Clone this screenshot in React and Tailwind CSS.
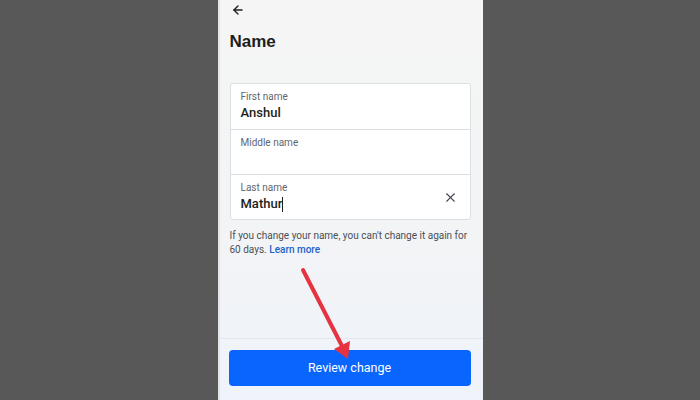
import { ArrowLeft, X } from 'lucide-react'

const fields = [
  { label: 'First name', value: 'Anshul' },
  { label: 'Middle name', value: '' },
  { label: 'Last name', value: 'Mathur', clear: true, cursor: true },
]

export default function App() {
  return (
    <div className="w-[700px] h-[400px] bg-[#585858] flex justify-center overflow-hidden font-['Roboto',Arial,sans-serif]">
      <div className="relative w-[265px] h-full flex flex-col pl-[10px] pr-[12px] bg-gradient-to-b from-[#f4f5f4] via-[#f3f4f5] to-[#eff3fa] border-l-2 border-[#e6e6e6]">
        <div className="pt-[3px] h-[18px] pl-[1px]">
          <ArrowLeft className="w-[14px] h-[14px] text-[#1c1e21]" strokeWidth={2.3} />
        </div>
        <h1 className="mt-[14px] text-[17px] leading-[20px] font-bold text-[#1c1e21] font-['Liberation_Sans',Arial,sans-serif]">Name</h1>

        <div className="mt-[31px] bg-white border border-[#dcdfe3] rounded-[3px]">
          {fields.map((f, i) => (
            <div
              key={f.label}
              className={`h-[45px] flex items-center pl-[10px] pr-[12px] ${i > 0 ? 'border-t border-[#dcdfe3]' : ''}`}
            >
              <div className="flex-1 self-start pt-[7px]">
                <div className="text-[10px] leading-[12px] text-[#606770]">{f.label}</div>
                <div className="mt-[2px] h-[16px] text-[13px] leading-[16px] font-medium text-[#1c1e21] flex items-center">
                  {f.value}
                  {f.cursor && <span className="inline-block w-[1px] h-[15px] bg-[#1c1e21]" />}
                </div>
              </div>
              {f.clear && <X className="w-[15px] h-[15px] text-[#444950]" strokeWidth={1.8} />}
            </div>
          ))}
        </div>

        <p className="mt-[9px] text-[10px] leading-[14px] text-[#4b4f56]">
          If you change your name, you can't change it again for 60 days.{' '}
          <span className="text-[#1b64c8] font-medium">Learn more</span>
        </p>

        <div className="flex-1" />
        <div className="border-t border-[#e4e7ec] -ml-[10px] -mr-[12px] pl-[9px] pr-[12px] pt-[11px] pb-[14px]">
          <button className="w-full h-[36px] rounded-[4px] bg-[#0866ff] text-white text-[12.5px] font-normal">
            Review change
          </button>
        </div>

        <svg className="absolute inset-0 pointer-events-none" width="265" height="400" viewBox="0 0 265 400">
          <line x1="83" y1="270" x2="122" y2="346" stroke="#e5333f" strokeWidth="4" strokeLinecap="round" />
          <polygon points="128,359 114,349 130,341" fill="#e5333f" />
        </svg>
      </div>
    </div>
  )
}
